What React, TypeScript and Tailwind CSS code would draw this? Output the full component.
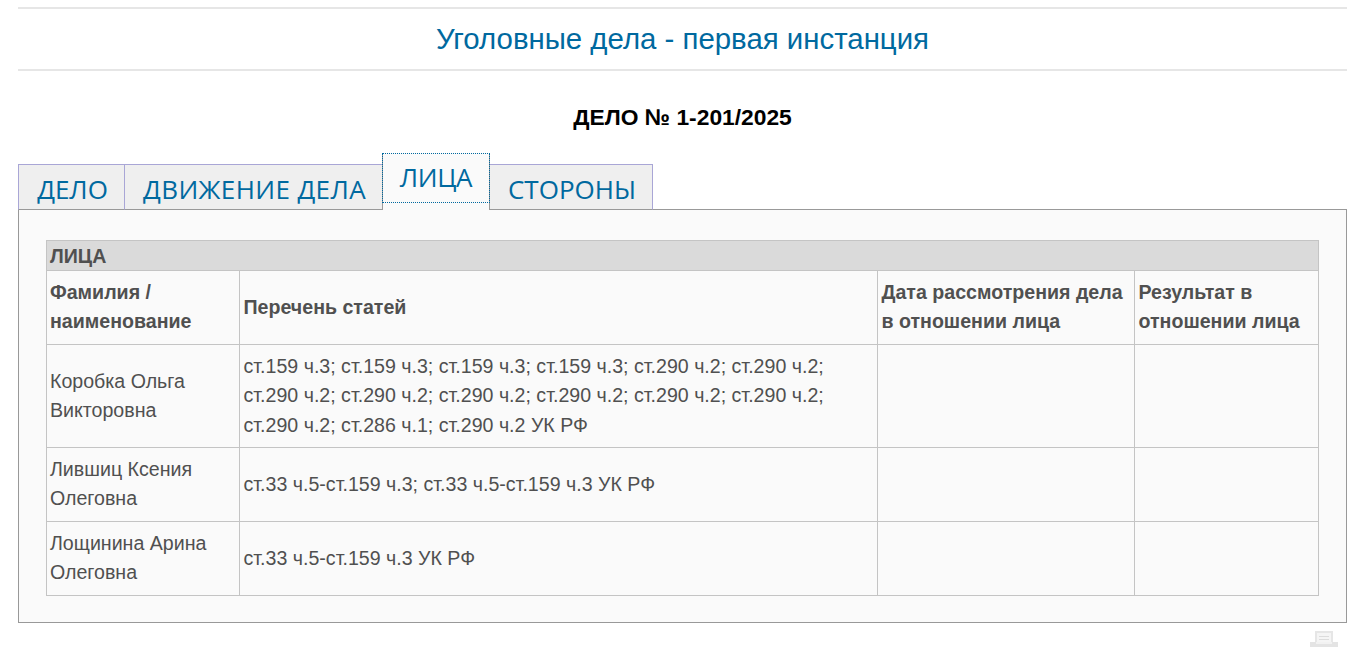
const font = "font-['Liberation_Sans',Arial,sans-serif]";

const rows = [
  {
    name: "Коробка Ольга Викторовна",
    articles:
      "ст.159 ч.3; ст.159 ч.3; ст.159 ч.3; ст.159 ч.3; ст.290 ч.2; ст.290 ч.2; ст.290 ч.2; ст.290 ч.2; ст.290 ч.2; ст.290 ч.2; ст.290 ч.2; ст.290 ч.2; ст.290 ч.2; ст.286 ч.1; ст.290 ч.2 УК РФ",
  },
  {
    name: "Лившиц Ксения Олеговна",
    articles: "ст.33 ч.5-ст.159 ч.3; ст.33 ч.5-ст.159 ч.3 УК РФ",
  },
  {
    name: "Лощинина Арина Олеговна",
    articles: "ст.33 ч.5-ст.159 ч.3 УК РФ",
  },
];

const tabFont = "font-['Open_Sans',sans-serif] text-[26px] leading-[36px] text-[#00699f]";
const inactive = `-mb-px h-[46px] border border-[#a9a6d6] border-b-[#999] bg-[#efefef] pl-[2px] pt-[6px] text-center ${tabFont}`;
const cell = "border border-[#c4c4c4] py-[7px] pl-[3.5px] pr-[4px] align-middle";

function PrintIcon() {
  return (
    <svg width="28" height="16" viewBox="0 0 28 16" className="block">
      <rect x="5" y="0" width="18" height="12" fill="#e6e6e6" />
      <rect x="7" y="2" width="14" height="9" fill="#f5f5f5" />
      <rect x="9" y="5" width="10" height="1" fill="#dcdcdc" />
      <rect x="9" y="8" width="10" height="1" fill="#dcdcdc" />
      <rect x="0" y="11" width="28" height="5" fill="#e4e4e4" />
      <rect x="6" y="11" width="16" height="2" fill="#f2f2f2" />
    </svg>
  );
}

export default function App() {
  return (
    <div className={`${font} h-[648px] overflow-hidden bg-white pl-[18px] pr-[21px] pt-[7px]`}>
      <h1 className="h-[64px] border-y-2 border-[#e6e6e6] text-center text-[29.4px] font-normal leading-[60px] text-[#00699f]">
        Уголовные дела - первая инстанция
      </h1>
      <h2 className="mt-[33px] h-[30px] text-center text-[22.8px] font-bold leading-[26px] text-black">
        ДЕЛО № 1-201/2025
      </h2>
      <div className="mt-[19px] flex h-[56px] items-end">
        <div className={`${inactive} w-[107px]`}>ДЕЛО</div>
        <div className={`${inactive} -ml-px w-[259px] tracking-[0.4px]`}>ДВИЖЕНИЕ ДЕЛА</div>
        <div className="relative z-10 -mb-px -ml-px h-[57px] w-[108px] border-x border-[#999] bg-[#fafafa]">
          <div className={`-mx-px h-[50px] border border-dotted border-[#00699f] pt-[5px] text-center tracking-[-0.3px] ${tabFont}`}>
            ЛИЦА
          </div>
        </div>
        <div className={`${inactive} -ml-px w-[164px]`}>СТОРОНЫ</div>
      </div>
      <div className="h-[414px] border border-[#999] bg-[#fafafa] px-[27px] pt-[30px]">
        <table className="w-[1272px] table-fixed border-collapse text-[19.6px] leading-[29.4px] text-[#505050]">
          <colgroup>
            <col className="w-[193px]" />
            <col className="w-[638px]" />
            <col className="w-[257px]" />
            <col className="w-[184px]" />
          </colgroup>
          <thead>
            <tr>
              <th colSpan={4} className="h-[30px] border border-[#c4c4c4] bg-[#dadada] pl-[3px] text-left font-bold leading-[28px]">
                ЛИЦА
              </th>
            </tr>
            <tr className="font-bold">
              <th className={`${cell} !pl-[3px] text-left`}>Фамилия / наименование</th>
              <th className={`${cell} text-left`}>Перечень статей</th>
              <th className={`${cell} text-left`}>Дата рассмотрения дела в отношении лица</th>
              <th className={`${cell} text-left`}>Результат в отношении лица</th>
            </tr>
          </thead>
          <tbody>
            {rows.map((row) => (
              <tr key={row.name}>
                <td className={`${cell} !pl-[3px]`}>{row.name}</td>
                <td className={cell}>{row.articles}</td>
                <td className={cell}></td>
                <td className={cell}></td>
              </tr>
            ))}
          </tbody>
        </table>
      </div>
      <div className="mt-[8px] flex justify-end pr-[9px]">
        <PrintIcon />
      </div>
    </div>
  );
}
